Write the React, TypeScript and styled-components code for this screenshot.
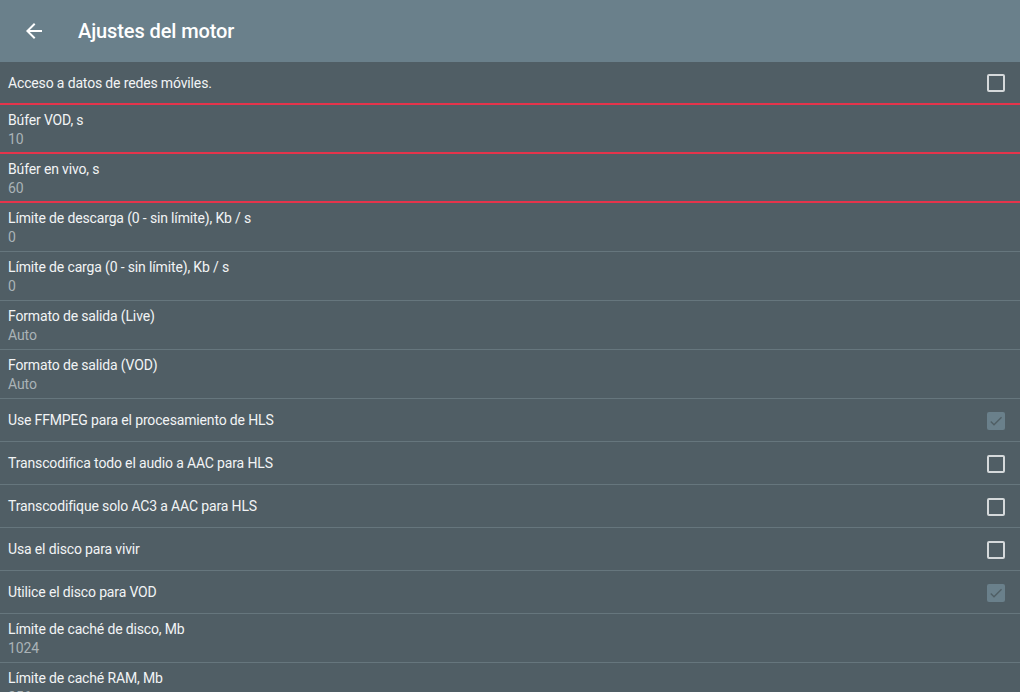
import React from 'react';
import styled, { createGlobalStyle } from 'styled-components';

const GlobalStyle = createGlobalStyle`
  html, body {
    margin: 0;
    padding: 0;
    background: #505e65;
    font-family: Roboto, "Noto Sans", sans-serif;
    -webkit-font-smoothing: antialiased;
  }
`;

type Setting =
  | { kind: 'check'; title: string; checked?: boolean; disabled?: boolean; marked?: boolean }
  | { kind: 'value'; title: string; value: string; marked?: boolean };

const settings: Setting[] = [
  { kind: 'check', title: 'Acceso a datos de redes móviles.', marked: true },
  { kind: 'value', title: 'Búfer VOD, s', value: '10', marked: true },
  { kind: 'value', title: 'Búfer en vivo, s', value: '60', marked: true },
  { kind: 'value', title: 'Límite de descarga (0 - sin límite), Kb / s', value: '0' },
  { kind: 'value', title: 'Límite de carga (0 - sin límite), Kb / s', value: '0' },
  { kind: 'value', title: 'Formato de salida (Live)', value: 'Auto' },
  { kind: 'value', title: 'Formato de salida (VOD)', value: 'Auto' },
  { kind: 'check', title: 'Use FFMPEG para el procesamiento de HLS', checked: true, disabled: true },
  { kind: 'check', title: 'Transcodifica todo el audio a AAC para HLS' },
  { kind: 'check', title: 'Transcodifique solo AC3 a AAC para HLS' },
  { kind: 'check', title: 'Usa el disco para vivir' },
  { kind: 'check', title: 'Utilice el disco para VOD', checked: true, disabled: true },
  { kind: 'value', title: 'Límite de caché de disco, Mb', value: '1024' },
  { kind: 'value', title: 'Límite de caché RAM, Mb', value: '256' },
];

export default function App(): JSX.Element {
  return (
    <>
      <GlobalStyle />
      <Screen>
        <AppBar>
          <BackButton aria-label="Atrás">
            <svg width="24" height="24" viewBox="0 0 24 24">
              <path
                fill="#ffffff"
                d="M20 11H7.83l5.59-5.59L12 4l-8 8 8 8 1.41-1.41L7.83 13H20v-2z"
              />
            </svg>
          </BackButton>
          <Title>Ajustes del motor</Title>
        </AppBar>
        <List>
          {settings.map((s) =>
            s.kind === 'check' ? (
              <CheckRow key={s.title} $marked={s.marked}>
                <RowTitle>{s.title}</RowTitle>
                <CheckBox $checked={s.checked} $disabled={s.disabled}>
                  {s.checked && (
                    <svg width="16" height="16" viewBox="0 0 24 24">
                      <path
                        fill="#505e65"
                        d="M9 16.17L4.83 12l-1.42 1.41L9 19 21 7l-1.41-1.41z"
                      />
                    </svg>
                  )}
                </CheckBox>
              </CheckRow>
            ) : (
              <ValueRow key={s.title} $marked={s.marked}>
                <RowTitle>{s.title}</RowTitle>
                <RowValue>{s.value}</RowValue>
              </ValueRow>
            )
          )}
        </List>
      </Screen>
    </>
  );
}

const Screen = styled.div`
  width: 1020px;
  height: 692px;
  overflow: hidden;
  display: flex;
  flex-direction: column;
  background: #505e65;
`;

const AppBar = styled.header`
  flex-shrink: 0;
  height: 62px;
  display: flex;
  align-items: center;
  background: #6a808b;
  padding-left: 22px;
  gap: 32px;
`;

const BackButton = styled.div`
  width: 24px;
  height: 24px;
  display: flex;
  margin-top: -1px;
`;

const Title = styled.h1`
  margin: 0;
  font-size: 20px;
  font-weight: 500;
  color: #ffffff;
  letter-spacing: -0.1px;
`;

const List = styled.div`
  display: flex;
  flex-direction: column;
`;

const rowBase = `
  box-sizing: border-box;
  flex-shrink: 0;
  padding: 0 15px 0 8px;
`;

const CheckRow = styled.div<{ $marked?: boolean }>`
  ${rowBase}
  height: 43px;
  display: flex;
  align-items: center;
  justify-content: space-between;
  border-bottom: ${({ $marked }) => ($marked ? '2px solid #e5344b' : '1px solid #66767d')};
`;

const ValueRow = styled.div<{ $marked?: boolean }>`
  ${rowBase}
  height: 49px;
  display: flex;
  flex-direction: column;
  justify-content: flex-start;
  gap: 3px;
  padding-top: 7px;
  border-bottom: ${({ $marked }) => ($marked ? '2px solid #e5344b' : '1px solid #66767d')};
`;

const RowTitle = styled.div`
  font-size: 14px;
  line-height: 16px;
  color: #f2f4f5;
  letter-spacing: -0.15px;
`;

const RowValue = styled.div`
  font-size: 14px;
  line-height: 16px;
  color: #aab3b7;
  letter-spacing: -0.1px;
`;

const CheckBox = styled.div<{ $checked?: boolean; $disabled?: boolean }>`
  box-sizing: border-box;
  width: 18px;
  height: 18px;
  border-radius: 2px;
  display: flex;
  align-items: center;
  justify-content: center;
  margin-top: 1px;
  border: ${({ $checked }) => ($checked ? 'none' : '2px solid #d5d9db')};
  background: ${({ $checked }) => ($checked ? '#6a808b' : 'transparent')};
`;
